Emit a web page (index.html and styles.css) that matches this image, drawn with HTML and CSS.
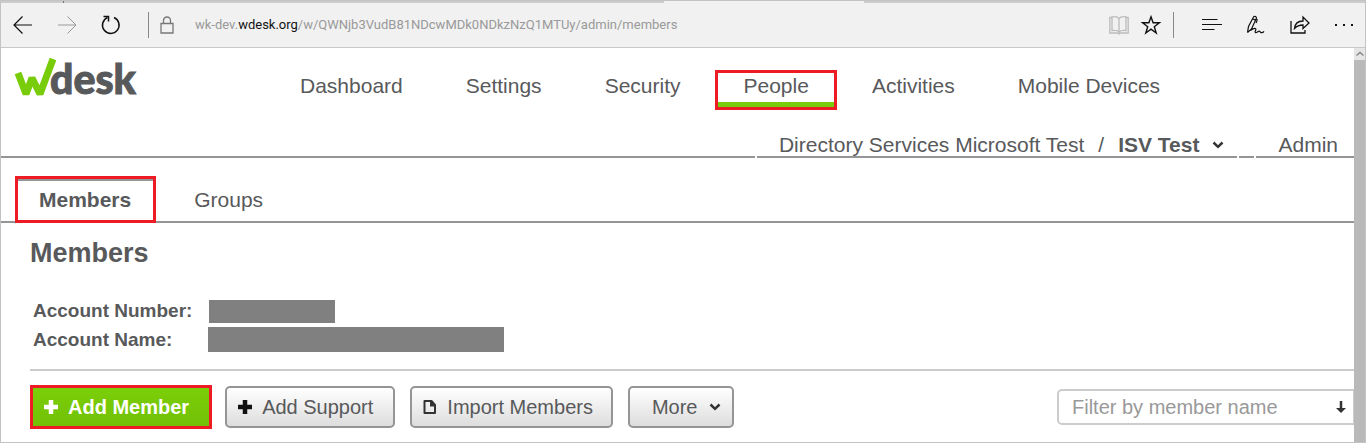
FILE: index.html
```html
<!DOCTYPE html>
<html lang="en">
<head>
<meta charset="utf-8">
<title>Wdesk Admin - Members</title>
<link rel="stylesheet" href="styles.css">
</head>
<body>
<div class="window">
  <div class="tabstrip"><span class="tab-edge"></span><span class="active-tab"></span></div>
  <div class="toolbar">
    <div class="toolbar-nav">
      <button class="icon-button" type="button" aria-label="Back"><svg width="20" height="20" viewBox="0 0 20 20"><path d="M19 10H1M9.500 1.500L1 10l8.500 8.500" stroke="#111" stroke-width="1.200"/></svg></button>
      <button class="icon-button" type="button" aria-label="Forward"><svg width="20" height="20" viewBox="0 0 20 20"><path d="M1 10h18M10.500 1.500L19 10l-8.500 8.500" stroke="#999"/></svg></button>
      <button class="icon-button" type="button" aria-label="Refresh"><svg width="20" height="20" viewBox="0 0 20 20"><path d="M13 2.500A8.300 8.300 0 1 1 6.300 2.600M2.500 1.500h5v5" stroke="#111" stroke-width="1.500"/></svg></button>
    </div>
    <span class="divider"></span>
    <svg class="lock" width="14" height="18" viewBox="0 0 14 18"><path d="M1 7.500h12v9.500H1zM3.500 7.500V4.500a3.500 3.500 0 0 1 7 0v3" stroke="#777" stroke-width="1.300"/></svg>
    <div class="address">wk-dev.<span class="domain">wdesk.org</span>/w/QWNjb3VudB81NDcwMDk0NDkzNzQ1MTUy/admin/members</div>
    <div class="toolbar-page">
      <button class="icon-button" type="button" aria-label="Reading view"><svg width="20" height="20" viewBox="0 0 20 20"><path d="M3 2.500H.8v15.500h7.500L10 19l1.700-1h7.500V2.500H17M10 18V3.500C8.500 1.500 5 1.500 3 1.800v13.700c3-.4 5.500-.3 7 1.500c1.500-1.800 4-1.900 7-1.500V1.800c-2-.3-5.500-.3-7 1.700" stroke="#bcbcbc" stroke-width="1.300"/></svg></button>
      <button class="icon-button" type="button" aria-label="Add to favorites"><svg width="20" height="20" viewBox="0 0 20 20"><path d="M10 1.800l2.100 6h6.300l-5.100 3.900 1.900 6.300-5.200-3.800L4.800 18l1.900-6.300L1.600 7.800h6.300z" stroke="#111" stroke-width="1.400"/></svg></button>
    </div>
    <span class="divider"></span>
    <div class="toolbar-tools">
      <button class="icon-button" type="button" aria-label="Hub"><svg width="20" height="20" viewBox="0 0 20 20"><path d="M0 4.500h15.500M0 9.500h20M0 14.500h12.500" stroke="#111" stroke-width="1.200"/></svg></button>
      <button class="icon-button" type="button" aria-label="Make a web note"><svg width="20" height="20" viewBox="0 0 20 20"><path d="M1.500 17.500l1-6L7.500 2c.9-1.500 3.600-.2 2.800 1.500L5.500 14l-4 3.500M7 4l3 1.400M10 3.500c2 .7 1 2.500 0 4.500M4.500 15.500c2-1.500 4.500-2.500 5.300-1.600c.8.900-1.600 2.800-.5 3.600c1.200.8 2.800-1.700 4.100-1.300c1.200.4 1 1.700 2.400 1.500c1 0 1.700-.7 2.200-1.400" stroke="#111" stroke-width="1.200"/></svg></button>
      <button class="icon-button" type="button" aria-label="Share"><svg width="20" height="20" viewBox="0 0 20 20"><path d="M1 6v12h14v-3M4.500 13.500C5 8.500 8 6 13 6V2l6 6-6 5.500V10c-4 0-6 .8-8.500 3.500z" stroke="#111" stroke-width="1.300"/></svg></button>
      <button class="icon-button" type="button" aria-label="More actions"><svg width="20" height="20" viewBox="0 0 20 20"><path d="M1 9h2v2H1zM9 9h2v2H9zM17 9h2v2h-2z" fill="#111"/></svg></button>
    </div>
  </div>
  <div class="viewport">
    <main class="page">
      <header class="header">
        <a class="logo" href="#" aria-label="Wdesk"><svg width="126" height="48" viewBox="0 0 126 48"><path d="M4 15l8 21 6-16 8 16L39 1" stroke="#78cc0a" stroke-width="7" stroke-linejoin="bevel"/><text class="logo-text" x="36" y="36">desk</text></svg></a>
        <nav class="main-nav">
          <a href="#">Dashboard</a>
          <a href="#">Settings</a>
          <a href="#">Security</a>
          <a class="current" href="#">People</a>
          <a href="#">Activities</a>
          <a href="#">Mobile Devices</a>
        </nav>
      </header>
      <div class="context">
        <span class="context-fill"></span>
        <div class="context-account"><span>Directory Services Microsoft Test</span><span>/</span><button class="account-menu" type="button">ISV Test<svg width="12" height="8" viewBox="0 0 12 8"><path d="M1.500 1.500L6 5.800l4.500-4.300" stroke="#333" stroke-width="2.500"/></svg></button></div>
        <span class="context-spacer"></span>
        <a class="context-admin" href="#">Admin</a>
      </div>
      <nav class="sub-nav">
        <a class="selected" href="#">Members</a>
        <a href="#">Groups</a>
      </nav>
      <section class="content">
        <h1>Members</h1>
        <dl class="account">
          <dt>Account Number:</dt><dd><span class="redacted number"></span></dd>
          <dt>Account Name:</dt><dd><span class="redacted name"></span></dd>
        </dl>
        <div class="actions">
          <button class="button primary" type="button"><svg width="14" height="14" viewBox="0 0 14 14"><path d="M7 0v14M0 7h14" stroke="#fff" stroke-width="4.500"/></svg>Add Member</button>
          <button class="button" type="button"><svg width="14" height="14" viewBox="0 0 14 14"><path d="M7 0v14M0 7h14" stroke="#111" stroke-width="4.500"/></svg>Add Support</button>
          <button class="button import" type="button"><svg width="14" height="14" viewBox="0 0 14 14"><path d="M1.500 1h7l3.500 4v8H1.500z" stroke="#333" stroke-width="2" stroke-linejoin="round"/><path d="M7 1v5.500h5.500L8.500 1z" fill="#333"/></svg>Import Members</button>
          <button class="button more" type="button">More<svg width="12" height="8" viewBox="0 0 12 8"><path d="M1.500 1.500L6 5.800l4.500-4.300" stroke="#333" stroke-width="2.500"/></svg></button>
          <div class="filter">
            <input type="text" placeholder="Filter by member name" aria-label="Filter by member name">
            <svg width="10" height="14" viewBox="0 0 10 14"><path d="M5 1v9" stroke="#333" stroke-width="2.500"/><path d="M0 8h10L5 13z" fill="#333"/></svg>
          </div>
        </div>
      </section>
    </main>
    <div class="scrollbar"><svg width="11" height="12" viewBox="0 0 11 12"><path d="M2.500 7.500l3.500-3 3.500 3" stroke="#888" stroke-width="1.500"/></svg></div>
  </div>
</div>
</body>
</html>
```
FILE: styles.css
```css
* { box-sizing: border-box; }

body {
  margin: 0;
  font-family: "Liberation Sans", Arial, sans-serif;
  font-size: 21px;
  line-height: 24px;
  color: #58595b;
  background: #fff;
}

a { color: inherit; text-decoration: none; }
button { font: inherit; color: inherit; cursor: pointer; }
svg { display: block; flex: none; fill: none; overflow: visible; }

.window {
  display: flex;
  flex-direction: column;
  min-height: 100vh;
  border: 1px solid #c3c3c3;
}

.tabstrip {
  display: flex;
  justify-content: space-between;
  height: 2px;
  padding: 0 501px 0 62px;
  background: #ccc;
}
.tab-edge { width: 1px; background: #777; }
.active-tab { width: 200px; background: #f1f1f1; }

.toolbar {
  display: flex;
  align-items: center;
  height: 45px;
  padding: 0 11px 0 12px;
  background: #f1f1f1;
  border-bottom: 1px solid #c8c8c8;
}
.toolbar-nav { display: flex; gap: 24px; margin-right: 27px; }
.toolbar-page { display: flex; gap: 12px; margin-right: 12px; }
.toolbar-tools { display: flex; gap: 24px; margin-left: 28px; }
.icon-button { padding: 0; border: 0; background: none; }
.divider { width: 1px; height: 26px; background: #888; }
.lock { margin: 0 21px 0 11px; }
.address {
  flex: 1;
  font-family: Roboto, sans-serif;
  font-size: 13px;
  color: #999;
  white-space: nowrap;
}
.domain { color: #111; }

.viewport { display: flex; flex: 1; }
.page { flex: 1; min-width: 0; }
.scrollbar {
  width: 11px;
  background: #b9b9b9;
}
.scrollbar svg { background: #e6e6e6; }

.header {
  display: flex;
  align-items: flex-start;
  height: 80px;
  padding: 10px 0 0 13px;
}
.logo { margin-right: 135px; }
.logo-text {
  font-family: Lato, sans-serif;
  font-size: 41px;
  font-weight: 900;
  line-height: 48px;
  fill: #58595b;
  stroke: #58595b;
  stroke-width: 1px;
}
.main-nav { display: flex; gap: 13px; padding-top: 15px; white-space: nowrap; }
.main-nav a { padding: 1px 25px 4px; }
.main-nav .current {
  border-bottom: 5px solid #78cc0a;
  outline: 3px solid #ed1c24;
}

.context {
  display: flex;
  gap: 2px;
  padding-top: 6px;
  line-height: 22px;
  white-space: nowrap;
}
.context > * { border-bottom: 2px solid #959595; }
.context-fill { flex: 1; }
.context-account { display: flex; gap: 14px; padding: 0 13px 0 22px; }
.account-menu {
  display: flex;
  align-items: center;
  gap: 13px;
  padding: 0;
  border: 0;
  background: none;
  font-weight: bold;
}
.context-spacer { width: 15px; }
.context-admin { padding: 0 16px 0 22px; }

.sub-nav {
  display: flex;
  gap: 38px;
  padding: 18px 14px 0;
  border-bottom: 2px solid #959595;
}
.sub-nav a { padding: 12px 0 9px; }
.sub-nav .selected {
  margin-bottom: -2px;
  padding: 9px 22px 8px 21px;
  border: 3px solid #ed1c24;
  box-shadow: inset 0 2px #959595;
  background: #fff;
  font-weight: bold;
}

.content { padding: 14px 0 0 29px; }
h1 { margin: 0 0 30px; font-size: 27px; line-height: 32px; }

.account {
  display: grid;
  grid-template-columns: 175px 1fr;
  align-items: center;
  row-gap: 4px;
  margin: 0;
  padding: 0 0 17px 3px;
  border-bottom: 2px solid #ccc;
  font-size: 19px;
}
dt { font-weight: bold; }
dd { margin: 0; }
.redacted { display: block; background: #808080; }
.number { width: 126px; height: 23px; margin-left: 1px; }
.name { width: 296px; height: 25px; }

.actions {
  display: flex;
  align-items: center;
  gap: 15px;
  padding: 14px 0 13px;
  font-size: 20px;
}
.button {
  display: flex;
  align-items: center;
  gap: 10px;
  height: 42px;
  padding: 0 20px 0 11px;
  border: 2px solid #959595;
  border-radius: 5px;
  background: linear-gradient(#fff, #ddd);
  white-space: nowrap;
}
.button.primary {
  height: 44px;
  margin-right: -2px;
  border: 3px solid #ed1c24;
  border-radius: 0;
  background: linear-gradient(#7bcf08, #72c006);
  color: #fff;
  font-weight: bold;
}
.button.import { padding-right: 18px; }
.button.more { gap: 11px; padding: 0 11px 0 22px; }

.filter {
  display: flex;
  align-items: center;
  width: 297px;
  height: 36px;
  margin-left: auto;
  padding: 0 7px 0 13px;
  border: 2px solid #ccc;
  border-right-width: 1px;
  border-radius: 5px 0 0 5px;
}
.filter input {
  flex: 1;
  min-width: 0;
  padding: 0;
  border: 0;
  outline: 0;
  background: none;
  font: inherit;
  color: #58595b;
}
.filter input::placeholder { color: #999; opacity: 1; }
```
